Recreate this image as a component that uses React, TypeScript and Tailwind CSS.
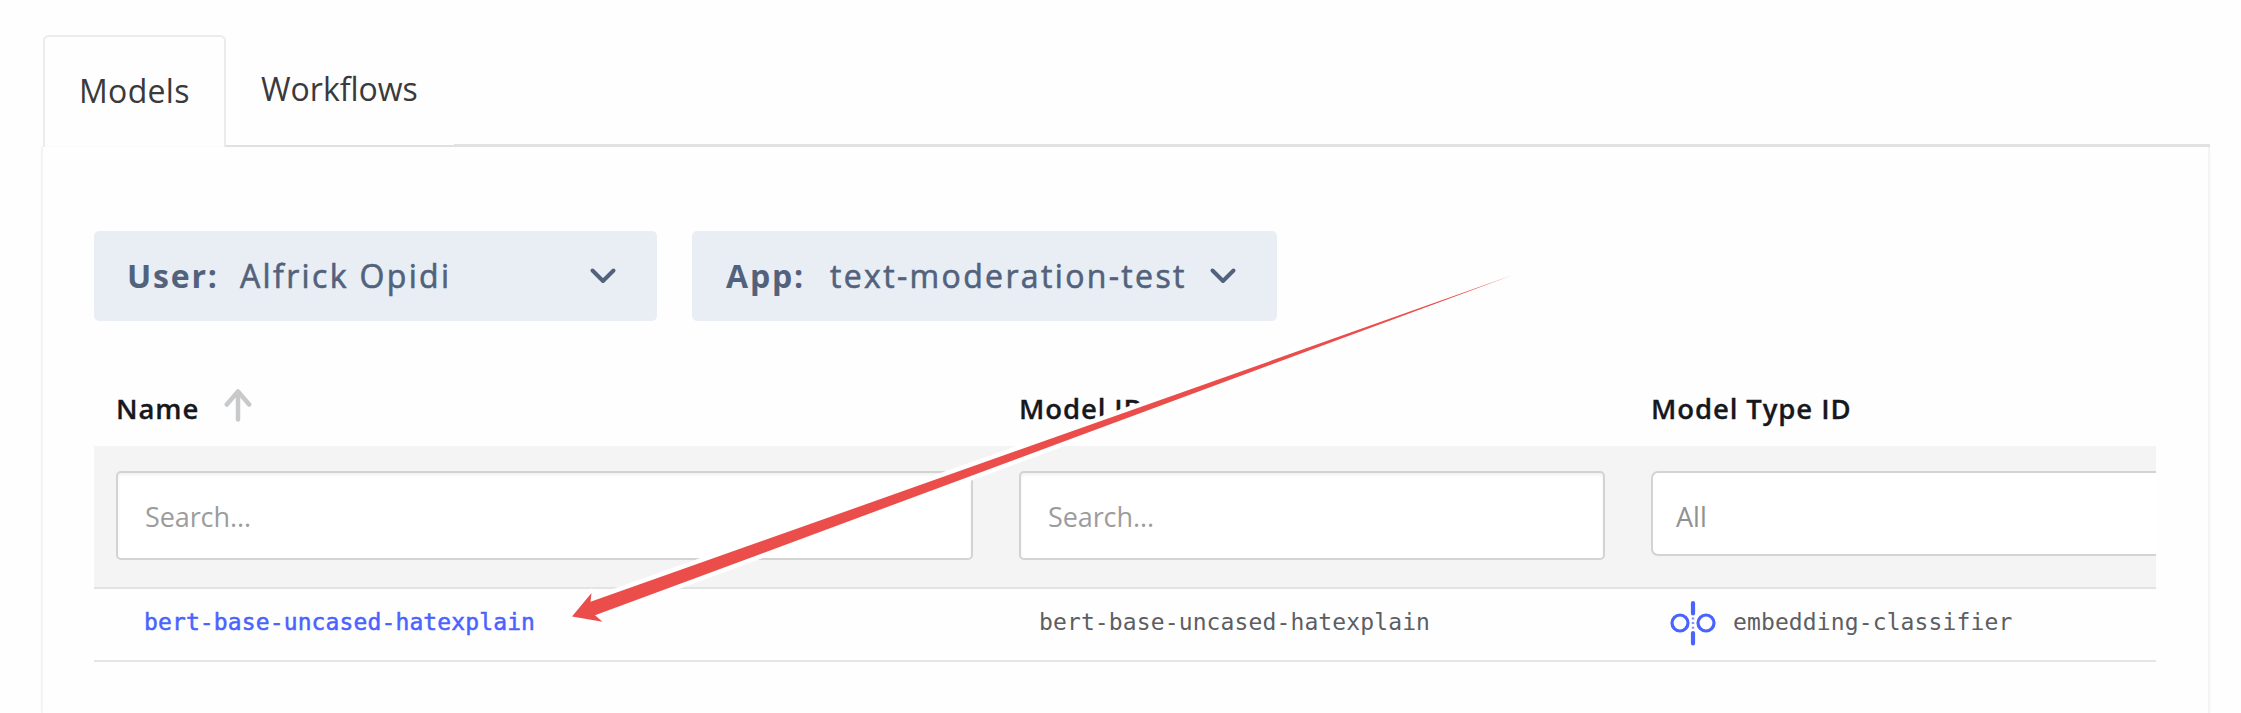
function Chevron() {
  return (
    <svg className="h-[18px] w-[28px] shrink-0" viewBox="0 0 28 18" fill="none" stroke="#53627c" strokeWidth="4" strokeLinecap="round" strokeLinejoin="round">
      <path d="M3.5 3.5 L14 14 L24.5 3.5" />
    </svg>
  );
}

function Picker({ label, value, className }: { label: string; value: string; className: string }) {
  return (
    <button className={`flex h-[90px] items-center rounded-[5px] bg-[#e9eef5] text-[32px] leading-none tracking-[2.35px] whitespace-nowrap text-[#53627c] ${className}`}>
      <span className="font-bold tracking-[1.8px]">{label}</span>
      <span className="[-webkit-text-stroke:0.6px_#53627c]">{value}</span>
      <Chevron />
    </button>
  );
}

function SearchBox({ className }: { className: string }) {
  return (
    <div className={`flex h-[89px] items-center rounded-[5px] border-2 border-[#d3d3d3] bg-white pt-[4px] pl-[27px] text-[27px] tracking-[-0.1px] text-[#9c9c9c] shadow-[inset_0_2px_3px_rgba(0,0,0,0.06)] ${className}`}>
      Search...
    </div>
  );
}

function ClassifierIcon() {
  return (
    <svg className="h-[48px] w-[48px]" viewBox="0 0 48 48" fill="none" stroke="#4a63ff">
      <circle cx="11" cy="24" r="8" strokeWidth="3.2" />
      <circle cx="37" cy="24" r="8" strokeWidth="3.2" />
      <path d="M24 4v10.5M24 34v10.5" strokeWidth="4.2" strokeLinecap="round" />
      <path d="M24 18.5v13" strokeWidth="2.4" strokeDasharray="2 2.6" strokeOpacity="0.7" />
    </svg>
  );
}

function PointerArrow() {
  return (
    <svg className="pointer-events-none absolute inset-0 h-[713px] w-[2241px]" viewBox="0 0 2241 713">
      <path d="M572 616.5 L591.5 593 L590.5 601.8 L1390 318.6 L1390 320.7 L595 615.3 L602.5 621.8 Z" fill="#fff" stroke="#fff" strokeWidth="9" strokeLinejoin="round" />
      <path d="M572 616.5 L591.5 593 L590.5 601.8 L1513 275 L595 615.3 L602.5 621.8 Z" fill="#eb4d4b" />
    </svg>
  );
}

export default function App() {
  return (
    <div className="relative flex h-[713px] w-[2241px] flex-col overflow-hidden bg-[#fefefe] pt-[35px] pl-[41px] font-['Open_Sans','Noto_Sans',sans-serif] text-[#16181d]">
      <nav className="flex h-[112px] w-[2169px] pl-[2px] text-[32px] leading-none text-[#3a3a3a]">
        <div className="flex w-[183px] rounded-t-[6px] border-2 border-b-0 border-[#ebebeb] pt-[38px] pl-[34px] tracking-[0.3px]">Models</div>
        <div className="w-[228px] border-b-2 border-[#e2e2e2] pt-[38px] pl-[35px]">Workflows</div>
        <div className="flex-1 border-b-[3px] border-[#e2e2e2]" />
      </nav>

      <main className="flex w-[2169px] flex-1 flex-col border-x-2 border-[#f4f4f4] pl-[51px] shadow-[0_0_4px_rgba(0,0,0,0.02)]">
        <div className="mt-[84px] flex gap-[35px]">
          <Picker label="User:" value="Alfrick Opidi" className="w-[563px] pr-[40px] pl-[33px] [&>span:first-child]:w-[113px] [&>span:first-child]:text-left [&>span:nth-child(2)]:flex-1 [&>span:nth-child(2)]:text-left" />
          <Picker label="App:" value="text-moderation-test" className="w-[585px] pr-[40px] pl-[34px] [&>span:first-child]:w-[104px] [&>span:first-child]:text-left [&>span:nth-child(2)]:flex-1 [&>span:nth-child(2)]:text-left" />
        </div>

        <div className="w-[2062px] overflow-hidden">
          <div className="flex h-[125px] items-start pt-[74px] text-[27.5px] leading-none font-semibold tracking-[0.9px] [-webkit-text-stroke:0.3px_#16181d]">
            <div className="flex w-[903px] pl-[22px]">
              Name
              <svg className="-mt-[7px] ml-[25px] h-[34px] w-[28px]" viewBox="0 0 28 34" fill="none" stroke="#c8c9cb" strokeWidth="4.5" strokeLinecap="round" strokeLinejoin="round">
                <path d="M14 31.5V3.5M2.8 16.5L14 3.5L25.2 16.5" />
              </svg>
            </div>
            <div className="w-[632px] pl-[22px]">Model ID</div>
            <div className="pl-[22px]">Model Type ID</div>
          </div>

          <div className="flex h-[143px] border-b-2 border-[#e3e3e3] bg-[#f4f4f4] pt-[25px] pl-[22px]">
            <SearchBox className="mr-[46px] w-[857px] shrink-0" />
            <SearchBox className="mr-[46px] w-[586px] shrink-0" />
            <div className="flex h-[85px] w-[600px] shrink-0 items-center rounded-[7px] border-2 border-[#d3d3d3] bg-white pt-[8px] pl-[23px] text-[27px] text-[#929292]">
              All
            </div>
          </div>

          <div className="flex h-[73px] items-center border-b-2 border-[#e5e5e5] pb-[3px] pl-[50px] font-['DejaVu_Sans_Mono',monospace] text-[23px] tracking-[0.12px] text-[#5b5e63]">
            <div className="w-[895px] pb-px text-[#4a63ff] [-webkit-text-stroke:0.5px_#4a63ff]">bert-base-uncased-hatexplain</div>
            <div className="w-[630px] pb-px">bert-base-uncased-hatexplain</div>
            <ClassifierIcon />
            <div className="ml-[16px] pb-px">embedding-classifier</div>
          </div>
        </div>
      </main>
      <PointerArrow />
    </div>
  );
}
